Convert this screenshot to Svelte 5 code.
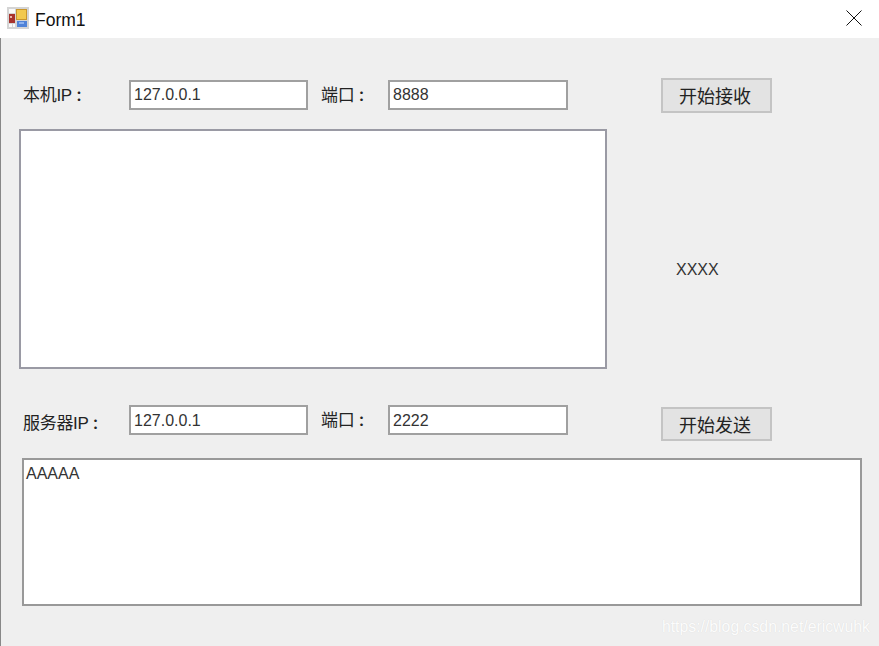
<script lang="ts">
  let localIp = $state('127.0.0.1');
  let localPort = $state('8888');
  let serverIp = $state('127.0.0.1');
  let serverPort = $state('2222');
  let received = $state('');
  let outgoing = $state('AAAAA');
</script>

<div class="form">
  <header class="titlebar">
    <svg class="appicon" width="22" height="22" viewBox="0 0 22 22">
      <rect x="0" y="0" width="22" height="22" fill="#d4d4d4" />
      <rect x="2" y="2" width="6" height="4" fill="#fafafa" />
      <rect x="2" y="7" width="6" height="9" fill="#a8322c" />
      <rect x="3" y="9" width="2" height="2" fill="#e9b5a8" />
      <rect x="2" y="17" width="3" height="3" fill="#fafafa" />
      <rect x="6" y="17" width="2" height="3" fill="#fafafa" />
      <rect x="9" y="2" width="11" height="11" fill="#c9962c" />
      <rect x="10" y="3" width="9" height="9" fill="#f2c94e" />
      <rect x="10" y="14" width="10" height="6" fill="#4f82d8" />
      <rect x="12" y="15" width="5" height="2" fill="#8db2ee" />
    </svg>
    <span class="title">Form1</span>
    <svg class="close" width="16" height="16" viewBox="0 0 16 16">
      <path d="M0.5 0.5L15.5 15.5M15.5 0.5L0.5 15.5" stroke="#111" stroke-width="1" fill="none" />
    </svg>
  </header>

  <main class="client">
    <div class="row row-top">
      <label class="name" for="local-ip">本机IP<span class="colon">：</span></label>
      <input id="local-ip" class="field" bind:value={localIp} />
      <label class="port" for="local-port">端口<span class="colon">：</span></label>
      <input id="local-port" class="field" bind:value={localPort} />
      <button class="btn">开始接收</button>
    </div>

    <div class="middle">
      <textarea class="log" bind:value={received}></textarea>
      <span class="status">XXXX</span>
    </div>

    <div class="row row-bottom">
      <label class="name" for="server-ip">服务器IP<span class="colon">：</span></label>
      <input id="server-ip" class="field" bind:value={serverIp} />
      <label class="port" for="server-port">端口<span class="colon">：</span></label>
      <input id="server-port" class="field" bind:value={serverPort} />
      <button class="btn">开始发送</button>
    </div>

    <textarea class="send" bind:value={outgoing}></textarea>
    <span class="watermark">https://blog.csdn.net/ericwuhk</span>
  </main>
</div>

<style>
  :global(body) {
    margin: 0;
    background: #efefef;
  }

  .form {
    width: 879px;
    height: 646px;
    display: flex;
    flex-direction: column;
    overflow: hidden;
    font-family: "Liberation Sans", "Noto Sans CJK SC", sans-serif;
    color: #222;
  }

  .titlebar {
    height: 38px;
    flex: none;
    background: #fff;
    display: flex;
    align-items: center;
    padding: 0 17px 0 7px;
    box-sizing: border-box;
  }

  .appicon {
    margin-top: -2px;
  }

  .title {
    margin-left: 6px;
    margin-top: 3px;
    font-size: 17.5px;
    color: #111;
  }

  .close {
    margin-left: auto;
    margin-top: -2px;
  }

  .client {
    position: relative;
    flex: 1;
    background: #efefef;
    padding: 40px 0 0 19px;
    display: flex;
    flex-direction: column;
    align-items: flex-start;
    box-shadow: inset 1px 0 0 #888;
  }

  .row {
    display: flex;
    align-items: flex-start;
    font-size: 17px;
  }

  .colon {
    font-size: 14px;
    font-family: "Noto Sans CJK TC", sans-serif;
    font-weight: 700;
  }

  .name {
    width: 106px;
    padding: 5px 0 0 4px;
    box-sizing: border-box;
    line-height: 24px;
    letter-spacing: -0.3px;
    white-space: nowrap;
  }

  .port {
    width: 67px;
    margin-left: 13px;
    padding-top: 5px;
    box-sizing: border-box;
    line-height: 24px;
    letter-spacing: -0.3px;
    white-space: nowrap;
  }

  .field {
    width: 179px;
    height: 30px;
    margin: 2px 0 0 4px;
    padding: 0 3px;
    box-sizing: border-box;
    border: 2px solid #a0a0a0;
    border-radius: 0;
    background: #fff;
    font: inherit;
    font-size: 16px;
    color: #333;
    outline: none;
  }

  .port + .field {
    width: 180px;
    margin-left: 0;
  }

  .btn {
    width: 111px;
    height: 35px;
    margin-left: 93px;
    padding: 0 3px 2px 0;
    border: 2px solid #c4c4c4;
    border-radius: 0;
    background: #e3e3e3;
    font: inherit;
    font-size: 18px;
    color: #222;
  }

  .middle {
    display: flex;
    align-items: center;
    margin-top: 16px;
  }

  .log {
    width: 588px;
    height: 240px;
    box-sizing: border-box;
    border: 2px solid #9a9aa4;
    background: #fff;
    resize: none;
    outline: none;
    display: block;
  }

  .status {
    margin-left: 69px;
    font-size: 16px;
    color: #333;
    padding-top: 42px;
  }

  .row-bottom {
    margin-top: 34px;
  }

  .row-bottom .name {
    padding-top: 8px;
  }

  .row-bottom .port {
    padding-top: 5px;
  }

  .row-bottom .field {
    padding-top: 1px;
  }

  .row-bottom .btn {
    height: 34px;
    margin-top: 4px;
    padding-bottom: 0;
  }

  .send {
    width: 840px;
    height: 148px;
    margin: 17px 0 0 3px;
    padding: 5px 2px;
    box-sizing: border-box;
    border: 2px solid #999;
    background: #fff;
    resize: none;
    outline: none;
    font: inherit;
    font-size: 16px;
    color: #333;
    display: block;
  }

  .watermark {
    position: absolute;
    right: 9px;
    bottom: 10px;
    font-size: 15.8px;
    color: #fff;
    opacity: 0.85;
    text-shadow: 0 0 1px rgba(0, 0, 0, 0.12);
  }
</style>
